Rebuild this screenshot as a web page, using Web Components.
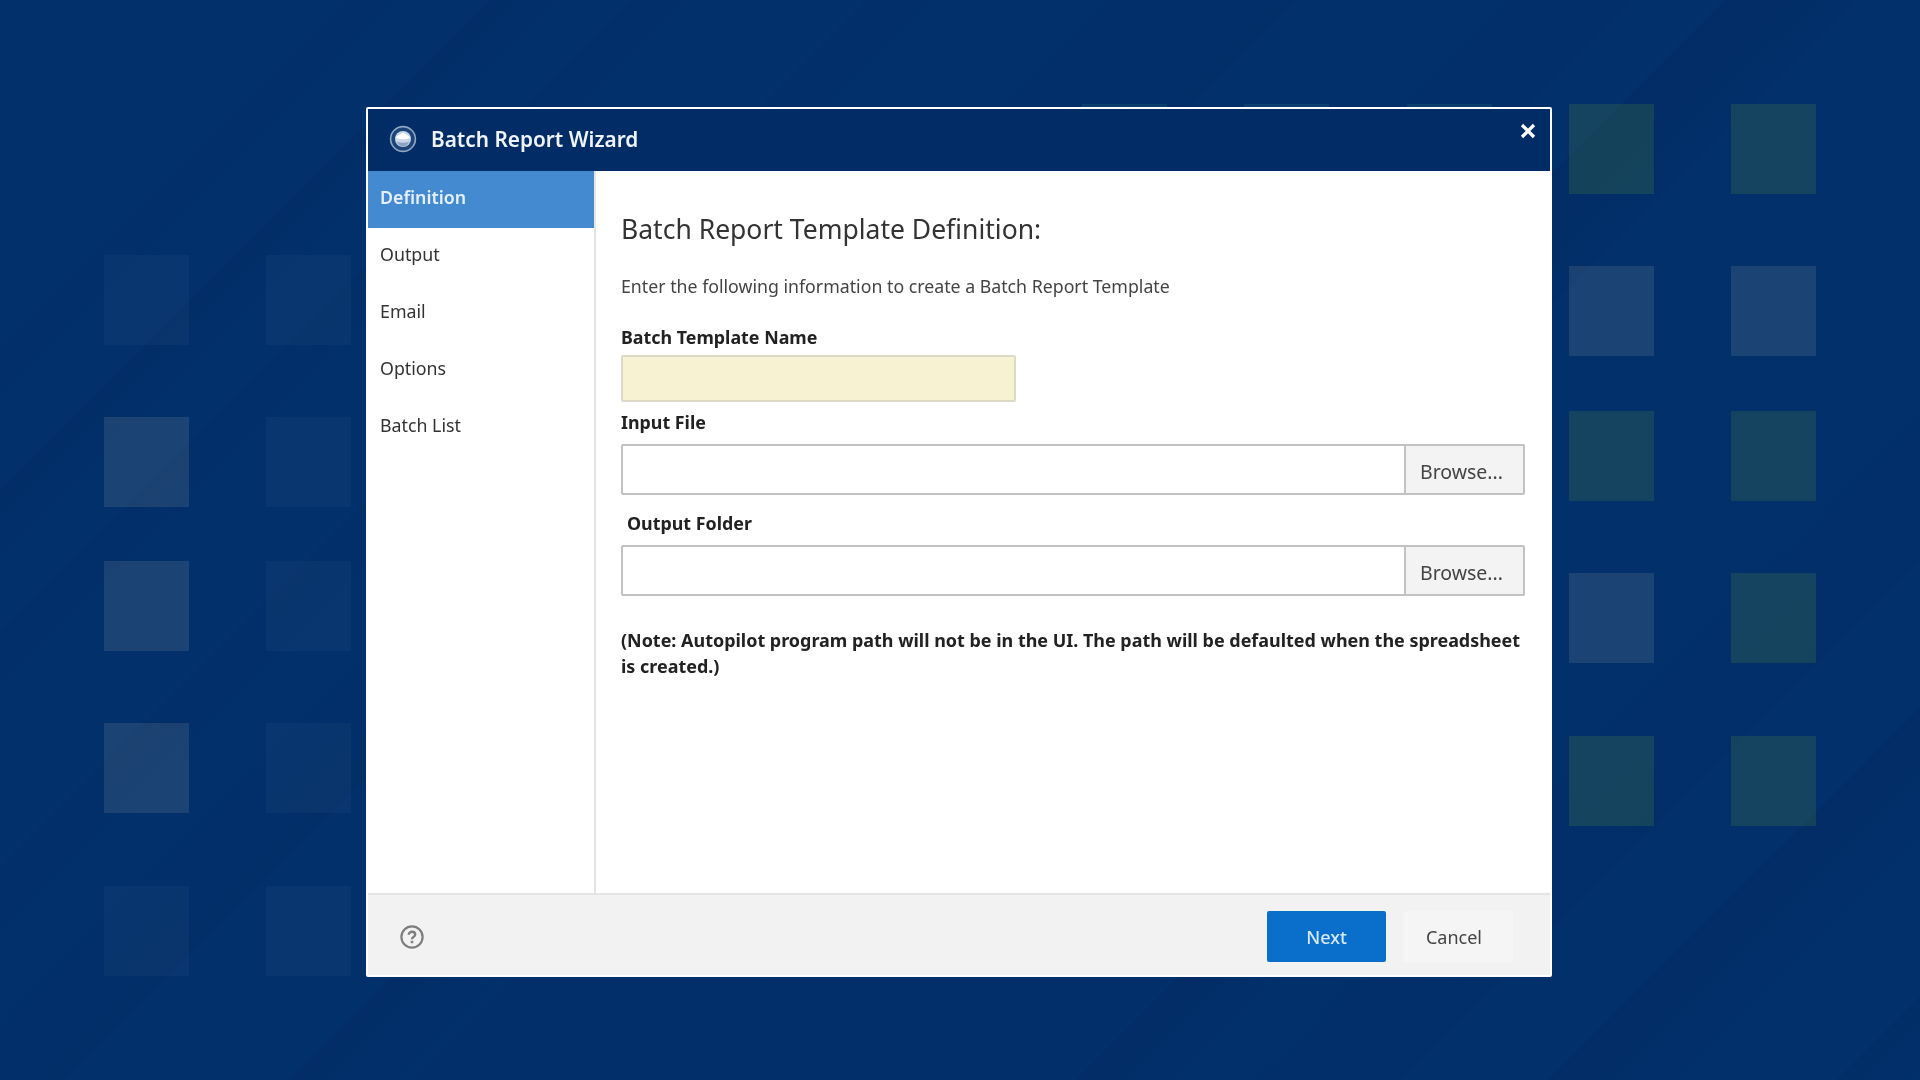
<!DOCTYPE html>
<html lang="en">
<head>
<meta charset="utf-8">
<title>Batch Report Wizard</title>
<style>
  html, body { margin: 0; padding: 0; background: #02306b; }
  body { font-family: "Noto Sans", "Liberation Sans", sans-serif; overflow: hidden; }
</style>
</head>
<body>
<wizard-desktop>
  <wizard-dialog heading="Batch Report Wizard">
    <wizard-nav-item slot="nav" active>Definition</wizard-nav-item>
    <wizard-nav-item slot="nav">Output</wizard-nav-item>
    <wizard-nav-item slot="nav">Email</wizard-nav-item>
    <wizard-nav-item slot="nav">Options</wizard-nav-item>
    <wizard-nav-item slot="nav">Batch List</wizard-nav-item>

    <definition-page></definition-page>

    <wizard-button slot="actions" kind="primary">Next</wizard-button>
    <wizard-button slot="actions">Cancel</wizard-button>
  </wizard-dialog>
</wizard-desktop>

<script>
// bands run along x + y = const, [from, to, opacity at from, opacity at to, top, bottom]
const BANDS = [
  [347, 425, 0.05, 0, 0, 1080],
  [490, 565, 0.14, 0, 0, 1080],
  [631, 705, 0.08, 0, 0, 1080],
  [868, 950, 0.08, 0, 0, 1080],
  [1000, 1144, 0, 0.1, 640, 1080],
  [1107, 1297, 0.02, 0.09, 0, 200],
  [1368, 1490, 0.14, 0, 890, 1080],
  [1490, 2150, 0.05, 0.05, 970, 1080],
  [1480, 1572, 0, 0.06, 0, 120],
  [1572, 1634, 0.06, 0.05, 0, 120],
  [1725, 1857, 0.18, 0.06, 0, 400],
  [2155, 2265, 0.18, 0, 970, 1080],
  [2300, 2481, 0, 0.09, 400, 1080],
  [2628, 2770, 0.18, 0, 600, 1080],
  [2916, 3000, 0.13, 0, 900, 1080],
];

const BLUE = "rgba(255, 239, 182, 0.1)";
const DIM = "rgba(255, 255, 255, 0.03)";
const TEAL = "rgba(127, 189, 32, 0.15)";
const TOP_TEAL = "rgba(100, 220, 160, 0.09)";

// x, y, fill
const SQUARES = [
  [104, 255, DIM], [266, 255, DIM],
  [104, 417, BLUE], [266, 417, DIM],
  [104, 561, BLUE], [266, 561, DIM],
  [104, 723, BLUE], [266, 723, DIM],
  [104, 886, DIM], [266, 886, DIM],
  [1082, 104, TOP_TEAL], [1244, 104, TOP_TEAL], [1407, 104, TOP_TEAL],
  [1569, 104, TEAL], [1731, 104, TEAL],
  [1569, 266, BLUE], [1731, 266, BLUE],
  [1569, 411, TEAL], [1731, 411, TEAL],
  [1569, 573, BLUE], [1731, 573, TEAL],
  [1569, 736, TEAL], [1731, 736, TEAL],
];

class WizardDesktop extends HTMLElement {
  constructor() {
    super();
    this.attachShadow({ mode: "open" });
  }

  connectedCallback() {
    const defs = BANDS.map((b, i) => `
      <linearGradient id="b${i}" gradientUnits="userSpaceOnUse" x1="${b[0] / 2}" y1="${b[0] / 2}" x2="${b[1] / 2}" y2="${b[1] / 2}">
        <stop offset="0" stop-color="#001d4a" stop-opacity="${b[2]}"/>
        <stop offset="1" stop-color="#001d4a" stop-opacity="${b[3]}"/>
      </linearGradient>`).join("");
    const bands = BANDS.map((b, i) => {
      const pts = [[b[0] - b[4], b[4]], [b[1] - b[4], b[4]], [b[1] - b[5], b[5]], [b[0] - b[5], b[5]]];
      return `<polygon fill="url(#b${i})" points="${pts.map((p) => p.join(",")).join(" ")}"/>`;
    }).join("");
    const squares = SQUARES.map((s) => `<rect x="${s[0]}" y="${s[1]}" width="85" height="90" fill="${s[2]}"/>`).join("");

    this.shadowRoot.innerHTML = `
      <style>
        :host {
          display: flex;
          position: relative;
          box-sizing: border-box;
          width: 1920px;
          height: 1080px;
          padding: 107px 0 0 366px;
          background: #02306b;
          overflow: hidden;
        }
        svg {
          position: absolute;
          left: 0;
          top: 0;
        }
      </style>
      <svg width="1920" height="1080" viewBox="0 0 1920 1080"><defs>${defs}</defs>${bands}${squares}</svg>
      <slot></slot>
    `;
  }
}

class WizardDialog extends HTMLElement {
  constructor() {
    super();
    this.attachShadow({ mode: "open" });
  }

  connectedCallback() {
    const heading = this.getAttribute("heading") || "";
    this.shadowRoot.innerHTML = `
      <style>
        :host {
          display: flex;
          flex-direction: column;
          position: relative;
          box-sizing: border-box;
          width: 1186px;
          height: 870px;
          border: 2px solid #fff;
          border-radius: 2px;
          background: #fff;
          filter: blur(0.35px);
        }
        .title {
          display: flex;
          align-items: center;
          box-sizing: border-box;
          height: 62px;
          padding: 0 0 2px 21px;
          background: #012c65;
          color: #f0f4fa;
          font-size: 20.800px;
          font-weight: 600;
          flex: none;
        }
        .title svg { margin-right: 14px; flex: none; }
        .close {
          position: absolute;
          right: 14px;
          top: 14px;
          width: 16px;
          height: 16px;
        }
        .body {
          display: flex;
          flex: 1;
          min-height: 0;
        }
        nav {
          display: flex;
          flex-direction: column;
          width: 226px;
          border-right: 2px solid #e4e4e4;
          flex: none;
        }
        main {
          flex: 1;
          min-width: 0;
        }
        footer {
          display: flex;
          align-items: center;
          box-sizing: border-box;
          height: 82px;
          border-top: 2px solid #e4e4e4;
          background: #f2f2f3;
          flex: none;
          padding: 3px 37px 0 32px;
        }
        footer svg { flex: none; }
        .actions {
          display: flex;
          align-items: center;
          gap: 17px;
          margin-left: auto;
        }
      </style>
      <div class="title">
        <svg width="28" height="28" viewBox="0 0 28 28">
          <circle cx="14" cy="14" r="12.400" fill="#1c4478" stroke="#8fa6c4" stroke-width="1.600"/>
          <circle cx="14" cy="14" r="8" fill="#c9d7e8"/>
          <path d="M6.400 12.400 14 7.600l7.600 4.800q-7.600 3.800-15.200 0Z" fill="#fff"/>
          <path d="M7.600 16.400q6.400 2.600 12.800 0Q18 21.400 14 21.600 10 21.400 7.600 16.400Z" fill="#8ba4c4"/>
        </svg>
        <span>${heading}</span>
      </div>
      <svg class="close" viewBox="0 0 16 16"><path d="M2 2l12 12M14 2 2 14" stroke="#fff" stroke-width="3.200" fill="none"/></svg>
      <div class="body">
        <nav><slot name="nav"></slot></nav>
        <main><slot></slot></main>
      </div>
      <footer>
        <svg width="24" height="24" viewBox="0 0 24 24" fill="none" stroke="#7e7e7e">
          <circle cx="12" cy="12" r="10.600" stroke-width="2.200"/>
          <path d="M8.800 9.800c0-1.900 1.300-3 3.200-3s3.200 1.100 3.200 2.700c0 2.400-3.200 2.400-3.200 4.700" stroke-width="2.400"/>
          <path d="M12 15.800v2.400" stroke-width="2.600"/>
        </svg>
        <div class="actions"><slot name="actions"></slot></div>
      </footer>
    `;
  }
}

class WizardNavItem extends HTMLElement {
  constructor() {
    super();
    this.attachShadow({ mode: "open" });
  }

  connectedCallback() {
    this.shadowRoot.innerHTML = `
      <style>
        :host {
          display: flex;
          align-items: center;
          box-sizing: border-box;
          height: 57px;
          padding: 0 0 5px 12px;
          color: #333;
          font-size: 17.800px;
        }
        :host([active]) {
          background: #448ad0;
          color: #e6f0fa;
          font-weight: 600;
        }
      </style>
      <slot></slot>
    `;
  }
}

class FormField extends HTMLElement {
  constructor() {
    super();
    this.attachShadow({ mode: "open" });
  }

  connectedCallback() {
    const label = this.getAttribute("label") || "";
    const browse = this.hasAttribute("browse");
    this.shadowRoot.innerHTML = `
      <style>
        :host {
          display: block;
        }
        label {
          display: block;
          height: 26px;
          line-height: 26px;
          font-size: 17.850px;
          font-weight: 700;
          color: #222;
          padding-left: var(--label-indent, 0);
        }
        .row {
          display: flex;
          margin-top: var(--field-gap, 9px);
        }
        input {
          box-sizing: border-box;
          flex: 1;
          min-width: 0;
          height: 51px;
          margin: 0;
          border: 2px solid #c2c2c2;
          border-radius: 2px;
          background: #fff;
          outline: none;
        }
        :host([required]) input {
          flex: none;
          width: 395px;
          height: 47px;
          border-color: #dcd9c4;
          background: #f7f2d2;
        }
        button {
          box-sizing: border-box;
          width: 121px;
          height: 51px;
          margin-left: -2px;
          border: 2px solid #c2c2c2;
          border-radius: 0 2px 2px 0;
          background: #f3f3f3;
          color: #444;
          font: inherit;
          font-size: 19.500px;
          padding: 4px 6px 0 0;
        }
      </style>
      <label>${label}</label>
      <div class="row">
        <input type="text">
        ${browse ? "<button>Browse...</button>" : ""}
      </div>
    `;
  }
}

class DefinitionPage extends HTMLElement {
  constructor() {
    super();
    this.attachShadow({ mode: "open" });
  }

  connectedCallback() {
    this.shadowRoot.innerHTML = `
      <style>
        :host {
          display: block;
          padding: 38px 25px 0 25px;
        }
        h1 {
          margin: 0;
          height: 40px;
          line-height: 40px;
          font-size: 26.500px;
          font-weight: 400;
          color: #333;
        }
        p {
          margin: 24px 0 0;
          height: 26px;
          line-height: 26px;
          font-size: 17.740px;
          color: #444;
        }
        form-field { margin-top: 7px; }
        .name { margin-top: 25px; --field-gap: 5px; }
        .output { margin-top: 15px; --label-indent: 6px; }
        .note {
          margin-top: 31px;
          font-size: 17.950px;
          font-weight: 700;
          line-height: 26px;
          color: #222;
        }
      </style>
      <h1>Batch Report Template Definition:</h1>
      <p>Enter the following information to create a Batch Report Template</p>
      <form-field class="name" label="Batch Template Name" required></form-field>
      <form-field label="Input File" browse></form-field>
      <form-field class="output" label="Output Folder" browse></form-field>
      <div class="note">(Note: Autopilot program path will not be in the UI. The path will be defaulted when the spreadsheet<br>is created.)</div>
    `;
  }
}

class WizardButton extends HTMLElement {
  constructor() {
    super();
    this.attachShadow({ mode: "open" });
  }

  connectedCallback() {
    this.shadowRoot.innerHTML = `
      <style>
        :host {
          display: flex;
          align-items: center;
          justify-content: center;
          box-sizing: border-box;
          width: 110px;
          height: 51px;
          padding-right: 8px;
          border-radius: 2px;
          background: #f5f5f6;
          color: #444;
          font-size: 18px;
        }
        :host([kind="primary"]) {
          width: 119px;
          padding-right: 0;
          background: #0a6fcb;
          color: #d6e8f8;
          font-weight: 500;
        }
      </style>
      <slot></slot>
    `;
  }
}

customElements.define("wizard-desktop", WizardDesktop);
customElements.define("wizard-dialog", WizardDialog);
customElements.define("wizard-nav-item", WizardNavItem);
customElements.define("form-field", FormField);
customElements.define("definition-page", DefinitionPage);
customElements.define("wizard-button", WizardButton);
</script>
</body>
</html>
